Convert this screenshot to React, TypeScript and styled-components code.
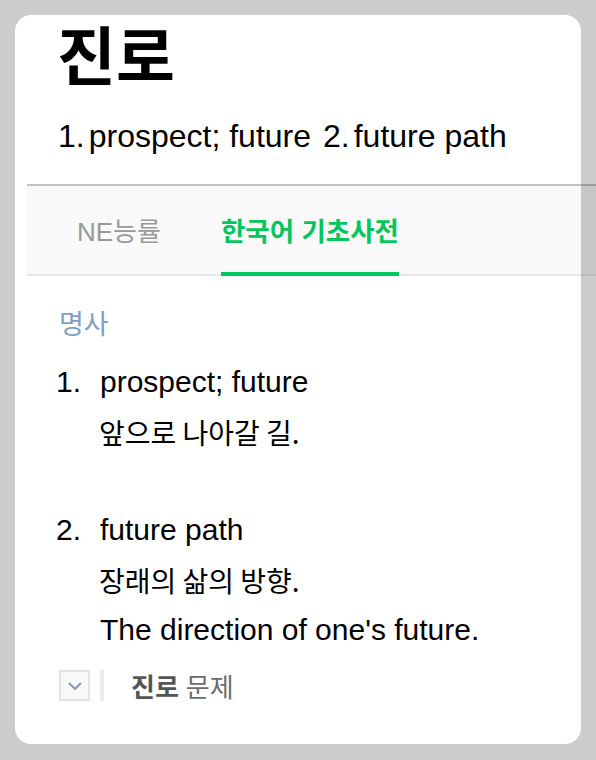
import React from "react";
import styled, { createGlobalStyle } from "styled-components";

const Global = createGlobalStyle`
  html, body {
    margin: 0;
    padding: 0;
    background: #cccccc;
    overflow: hidden;
  }
  body {
    font-family: "Liberation Sans", "Noto Sans CJK KR", sans-serif;
  }
`;

const Page = styled.div`
  padding: 15px 15px 16px 15px;
`;

const Card = styled.div`
  background: #ffffff;
  border-radius: 16px;
  width: 566px;
  height: 729px;
  box-sizing: border-box;
  display: flex;
  flex-direction: column;
`;

const Header = styled.div`
  padding: 1px 0 0 42px;
`;

const Title = styled.h1`
  margin: 0;
  font-family: "Noto Sans CJK KR", sans-serif;
  font-weight: 700;
  font-size: 64px;
  line-height: 72px;
  color: #000;
`;

const Meanings = styled.div`
  margin-top: 28px;
  display: flex;
  align-items: center;
  gap: 12px;
  font-size: 32px;
  line-height: 40px;
  color: #000;
  padding-left: 1px;
`;

const Meaning = styled.span`
  display: flex;
  gap: 4px;
`;

const TabStrip = styled.div`
  margin: 28px -15px 0 12px;
  height: 92px;
  box-sizing: border-box;
  border-top: 2px solid rgba(0, 0, 0, 0.21);
  border-bottom: 2px solid rgba(0, 0, 0, 0.065);
  background: rgba(0, 0, 0, 0.024);
  display: flex;
  gap: 60px;
  padding-left: 50px;
`;

const Tab = styled.div<{ $active?: boolean }>`
  height: 90px;
  box-sizing: border-box;
  padding-top: 0;
  display: flex;
  align-items: center;
  font-family: "Liberation Sans", "Noto Sans CJK KR", sans-serif;
  font-size: ${(p) => (p.$active ? "26.5px" : "26px")};
  font-weight: ${(p) => (p.$active ? 700 : 400)};
  color: ${(p) => (p.$active ? "#03c75a" : "#999999")};
  border-bottom: 4px solid ${(p) => (p.$active ? "#03c75a" : "transparent")};
  white-space: nowrap;
`;

const Body = styled.div`
  padding: 29px 0 0 41px;
  display: flex;
  flex-direction: column;
`;

const Pos = styled.div`
  font-family: "Noto Sans CJK KR", sans-serif;
  font-size: 27px;
  line-height: 36px;
  color: #819ec3;
  padding-left: 3px;
`;

const Item = styled.div<{ $first?: boolean }>`
  display: grid;
  grid-template-columns: 44px 1fr;
  margin-top: ${(p) => (p.$first ? "16px" : "48px")};
`;

const Num = styled.div`
  font-size: 30px;
  line-height: 50px;
  color: #000;
`;

const Lines = styled.div`
  display: flex;
  flex-direction: column;
`;

const En = styled.div`
  font-size: 30px;
  line-height: 50px;
  color: #000;
`;

const Ko = styled.div`
  font-family: "Noto Sans CJK KR", sans-serif;
  font-size: 28px;
  line-height: 50px;
  color: #000;
  margin-left: -1px;
`;

const Related = styled.div`
  margin-top: 12px;
  display: flex;
  align-items: center;
  padding-left: 3px;
`;

const Toggle = styled.div`
  width: 31px;
  height: 31px;
  box-sizing: border-box;
  border: 2px solid #e3e3e3;
  background: #f8f8f8;
  display: flex;
  align-items: center;
  justify-content: center;
`;

const Divider = styled.div`
  width: 4px;
  height: 31px;
  background: #ebebeb;
  margin-left: 10px;
  margin-right: 27px;
`;

const RelatedText = styled.div`
  font-family: "Noto Sans CJK KR", sans-serif;
  font-size: 26px;
  color: #6b6b6b;
  display: flex;
  gap: 7px;
`;

const Strong = styled.span`
  font-weight: 700;
  color: #555555;
`;

export default function App() {
  return (
    <>
      <Global />
      <Page>
        <Card>
          <Header>
            <Title>진로</Title>
            <Meanings>
              <Meaning>
                <span>1.</span>
                <span>prospect; future</span>
              </Meaning>
              <Meaning>
                <span>2.</span>
                <span>future path</span>
              </Meaning>
            </Meanings>
          </Header>
          <TabStrip>
            <Tab>NE능률</Tab>
            <Tab $active>한국어 기초사전</Tab>
          </TabStrip>
          <Body>
            <Pos>명사</Pos>
            <Item $first>
              <Num>1.</Num>
              <Lines>
                <En>prospect; future</En>
                <Ko>앞으로 나아갈 길.</Ko>
              </Lines>
            </Item>
            <Item>
              <Num>2.</Num>
              <Lines>
                <En>future path</En>
                <Ko>장래의 삶의 방향.</Ko>
                <En>The direction of one's future.</En>
              </Lines>
            </Item>
            <Related>
              <Toggle>
                <svg width="14" height="8" viewBox="0 0 14 8">
                  <path d="M1 1 L7 7 L13 1" fill="none" stroke="#8d96aa" strokeWidth="2" />
                </svg>
              </Toggle>
              <Divider />
              <RelatedText>
                <Strong>진로</Strong>
                <span>문제</span>
              </RelatedText>
            </Related>
          </Body>
        </Card>
      </Page>
    </>
  );
}
